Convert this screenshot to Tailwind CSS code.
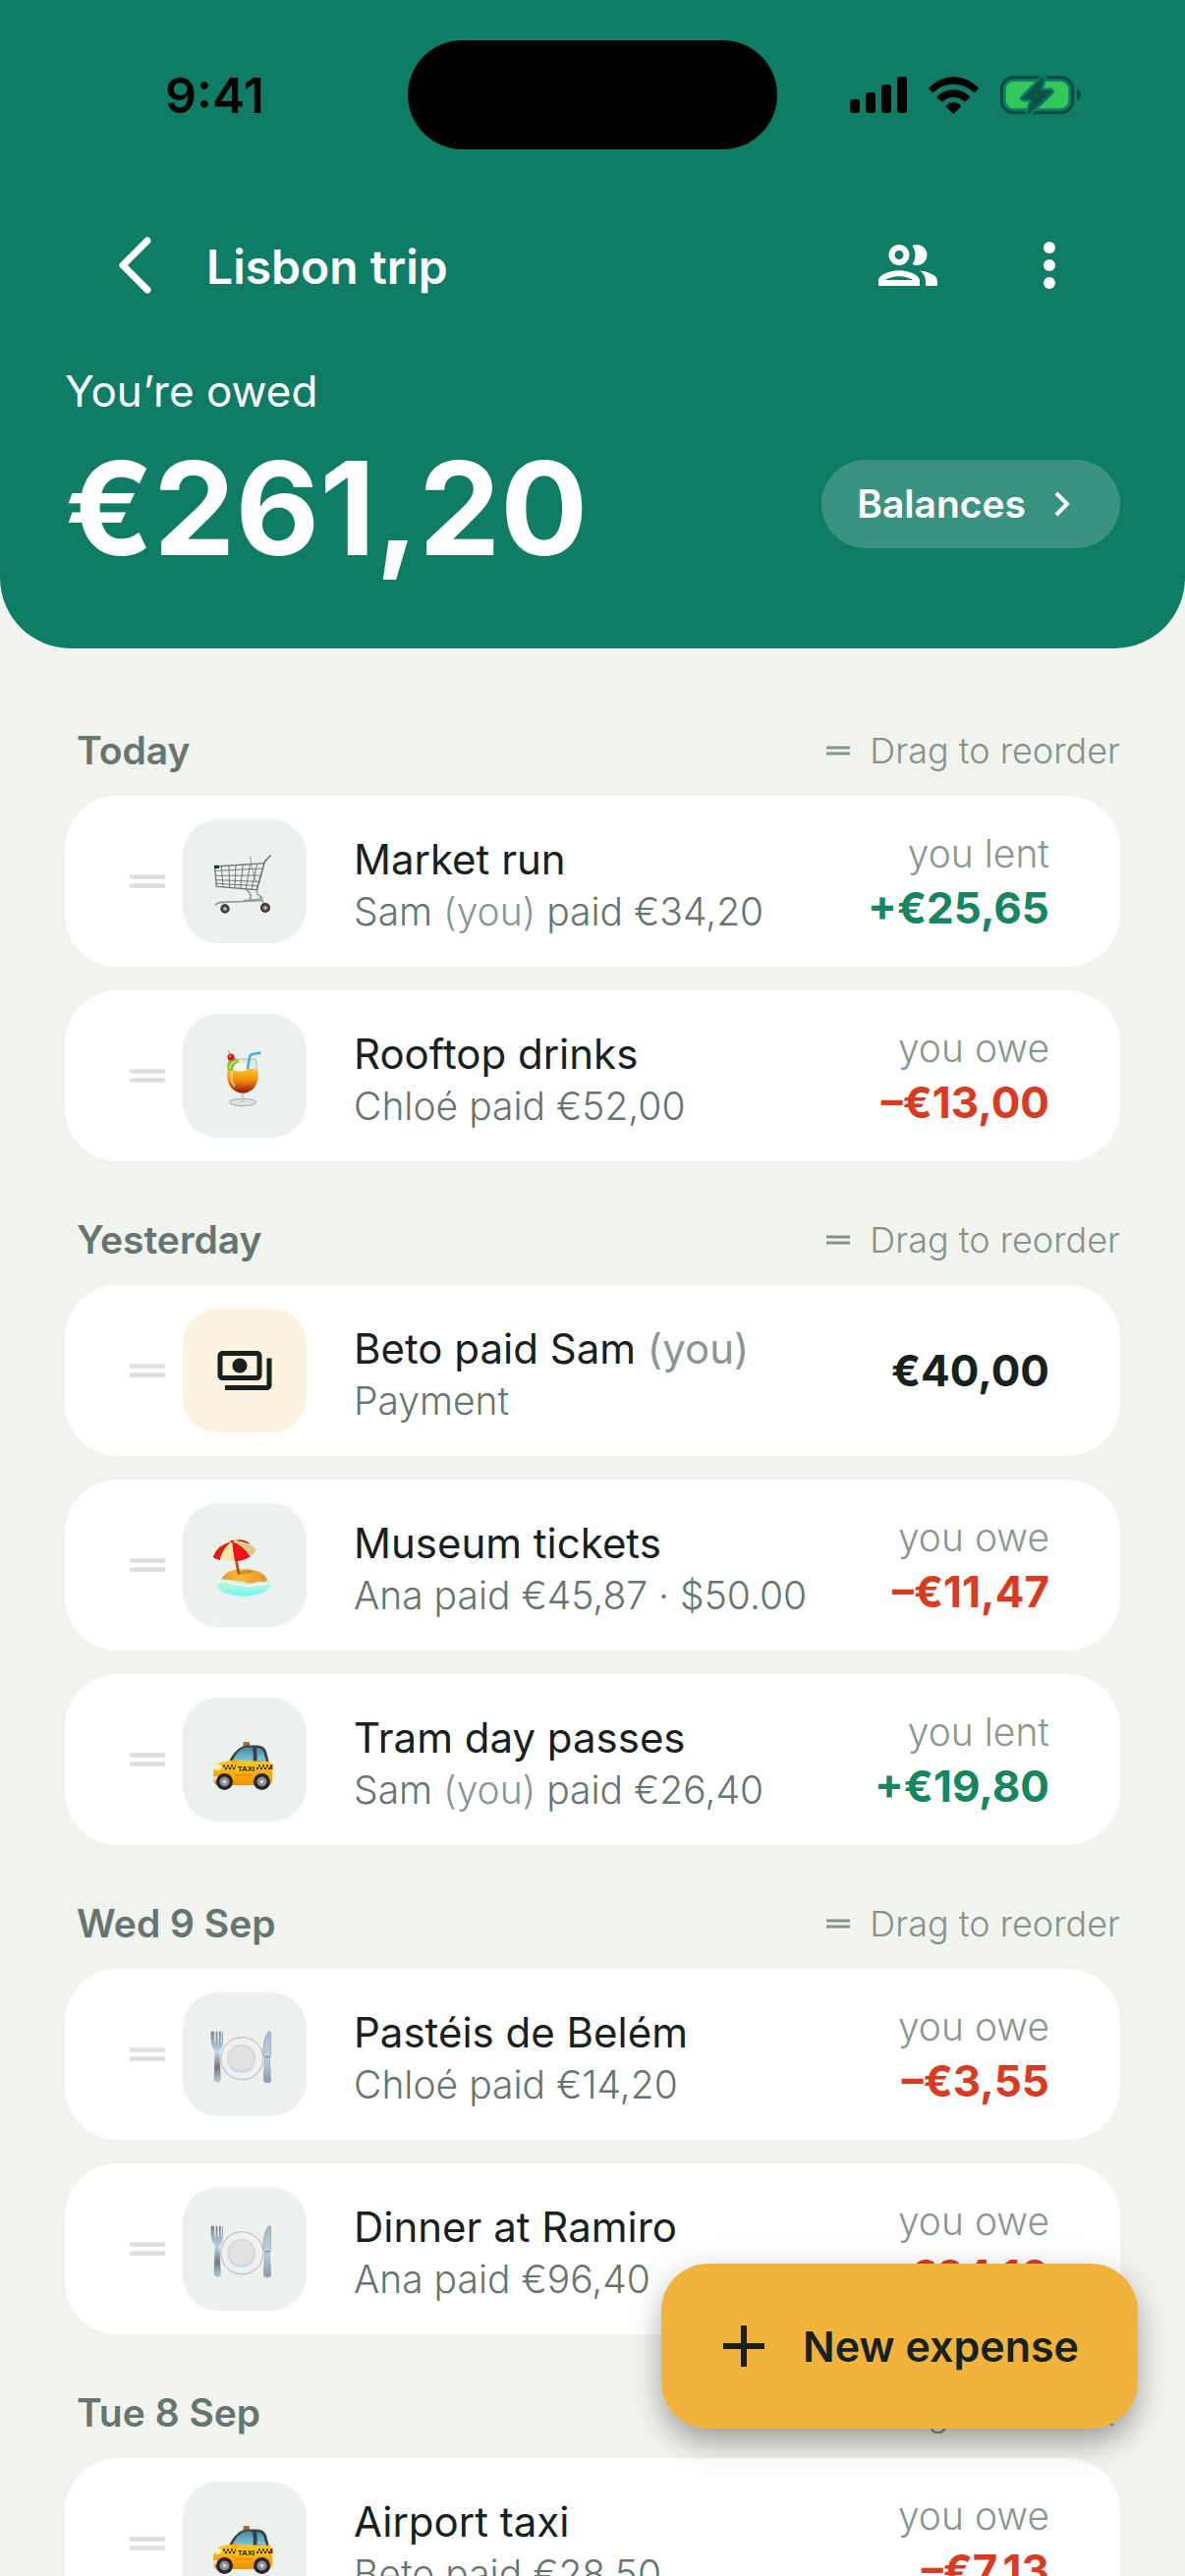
<!DOCTYPE html>
<html lang="en">
  <head>
    <meta charset="UTF-8" />
    <meta name="viewport" content="width=device-width, initial-scale=1.0" />
    <title>Lisbon trip</title>
    <!--tailwindcss CDN-->
    <script src="https://cdn.jsdelivr.net/npm/@tailwindcss/browser@4"></script>
  </head>
  <body class="bg-[#f1f3ee] font-['Inter',sans-serif] text-[#17211d]">
    <!--Shared icons-->
    <svg class="absolute w-0 h-0" aria-hidden="true" xmlns="http://www.w3.org/2000/svg">
      <defs>
        <linearGradient id="drink" x1="0" y1="0" x2="0" y2="1">
          <stop offset="0" stop-color="#ffc81e" />
          <stop offset="0.5" stop-color="#f48a10" />
          <stop offset="1" stop-color="#8c1408" />
        </linearGradient>
        <linearGradient id="sand" x1="0" y1="0" x2="1" y2="0">
          <stop offset="0" stop-color="#e09a3a" />
          <stop offset="0.4" stop-color="#fcb92c" />
          <stop offset="1" stop-color="#e0963c" />
        </linearGradient>
        <linearGradient id="sea" x1="0" y1="0" x2="0" y2="1">
          <stop offset="0" stop-color="#eaf3dc" />
          <stop offset="0.5" stop-color="#b4f3e4" />
          <stop offset="1" stop-color="#6ef7f2" />
        </linearGradient>
        <linearGradient id="taxiBody" x1="0" y1="0" x2="0" y2="1">
          <stop offset="0" stop-color="#ffc91f" />
          <stop offset="1" stop-color="#f29100" />
        </linearGradient>
        <linearGradient id="taxiGlass" x1="0" y1="0" x2="0" y2="1">
          <stop offset="0" stop-color="#3f8ea3" />
          <stop offset="1" stop-color="#86cbd6" />
        </linearGradient>
        <linearGradient id="steel" x1="0" y1="0" x2="0" y2="1">
          <stop offset="0" stop-color="#7c7f84" />
          <stop offset="0.4" stop-color="#b9d2ee" />
          <stop offset="0.7" stop-color="#77797d" />
          <stop offset="1" stop-color="#b5cbe4" />
        </linearGradient>
        <linearGradient id="blade" x1="0" y1="0" x2="0" y2="1">
          <stop offset="0" stop-color="#a9b5c2" />
          <stop offset="0.5" stop-color="#bcd0e6" />
          <stop offset="1" stop-color="#8b98a6" />
        </linearGradient>
      </defs>

      <symbol id="drag" viewBox="0 0 24 24">
        <path fill="currentColor" d="M20 9H4v2h16V9zM4 15h16v-2H4v2z" />
      </symbol>

      <symbol id="cart" viewBox="3 3 378 378">
        <g fill="none" stroke="#77777a" stroke-linecap="round" stroke-linejoin="round">
          <path stroke-width="3" stroke="#9b9b9d" d="M209 116l5 36 13 42" />
          <path stroke-width="4" d="M101 147l149-10M106 208l124 10M101 147l5 61" />
          <path stroke-width="5" d="M229 218l23-82q2-6 8-12l11-10" />
          <path stroke-width="3" d="M102 160l145-7M103 175l140-1M104 188l135 5M105 199l128 7" />
          <path stroke-width="3" d="M121 147l5 61M144 145l2 65M165 143l-3 68M187 142l-8 71M208 141l-12 74M230 139l-17 78" />
          <path stroke-width="5" stroke="#98999b" d="M196 217q24 18 10 32M230 218q-5 10 8 19 10 7 3 13l-60 4-62 2q-9 1-15 7" />
          <path stroke-width="4" stroke="#98999b" d="M190 250q38 0 49-5M243 240l7 24M126 258l5 10" />
        </g>
        <rect x="99" y="143" width="15" height="10" rx="2" fill="#1d3440" />
        <g fill="#77706f" stroke="#38322f" stroke-width="6">
          <circle cx="132" cy="276" r="11" />
          <circle cx="255" cy="273" r="12" />
        </g>
        <circle cx="132" cy="276" r="4" fill="#cfcfcf" />
        <circle cx="255" cy="273" r="4" fill="#cfcfcf" />
      </symbol>

      <symbol id="cocktail" viewBox="0 0 126 126">
        <ellipse cx="61" cy="90" rx="13.5" ry="3.6" fill="#dfe3e1" stroke="#a5aaa8" stroke-width="1" />
        <path d="M59.5 80h3v8q0 1 2 2h-7q2-1 2-2z" fill="#c9cdcb" />
        <path d="M47.500 46h27q0 6 1.500 13 1 7-1.500 12-4 9.500-13.500 10-9.500-.5-13.500-10-2.500-5-1.500-12 1.500-7 1.500-13z" fill="#e4e8de" stroke="#b9beb6" stroke-width="1" />
        <path d="M46 57q15-3 30 0 1.500 9-1 14-4 9-14 9.500-10-.5-14-9.500-2.500-5-1-14z" fill="url(#drink)" />
        <path d="M50 58q-2 10 3 16" fill="none" stroke="#fff" stroke-opacity=".5" stroke-width="2" />
        <ellipse cx="58" cy="54" rx="9" ry="4.500" fill="#fbf8e6" />
        <path d="M45.500 57q-1-11 5-12 5 0 7 4-6 1-7 9z" fill="#79bf2b" />
        <path d="M48 56q0-7 7-8" fill="none" stroke="#c9e87a" stroke-width="1.500" />
        <path d="M66 56l2-12q.5-2.500 3-3l8.500-1.500" fill="none" stroke="#3aaee8" stroke-width="2.400" />
        <path d="M46 37l3 6" stroke="#b1824a" stroke-width="1" />
        <circle cx="49" cy="44" r="3.600" fill="#dc1420" />
        <circle cx="48" cy="43" r="1" fill="#ff9c9c" />
      </symbol>

      <symbol id="beach" viewBox="3 0 378 378">
        <ellipse cx="189" cy="250" rx="82" ry="34" fill="url(#sea)" />
        <path d="M108 243q18-9 36-1 20 8 44 6 10 12 36 0 20 2 38-4" fill="none" stroke="#f4f6ea" stroke-width="7" />
        <path d="M121 232q12-28 60-31 66-1 80 32-4 10-24 6-10 0-18 5-22 1-30-5-38-5-68-7z" fill="url(#sand)" />
        <path d="M172 212q24-12 50-4-14 10-44 8z" fill="#a5651c" fill-opacity=".45" />
        <path d="M161 172l8-2 10 46q-5 4-9 1z" fill="#9a5a2c" />
        <path d="M95 165q14-42 57-52 50-10 74 28-2 11-20 23-20 10-44 15-36-10-67-14z" fill="#f7e7a4" />
        <path d="M95 165q14-38 57-47-28 20-36 56-10-2-21-9z" fill="#e01a18" />
        <path d="M154 118q30 8 56 44-18 14-48 16-6-30-8-60z" fill="#ec1416" />
        <path d="M162 113q32-6 46 12-22-7-46-12z" fill="#c9231c" />
        <path d="M156 116q44 2 70 24-2 12-18 23-18-34-52-47z" fill="#d9cb8c" />
        <ellipse cx="154" cy="116" rx="6" ry="3" fill="#b81a14" />
      </symbol>

      <symbol id="taxi" viewBox="0 0 126 126">
        <rect x="61.500" y="45" width="6.500" height="5" rx="1" fill="#a8712a" />
        <path d="M46 67q8-18 20-18.500h9q8 0 10 6l3.500 14z" fill="#383f45" />
        <path d="M50 66q5-14 15-15.500h5.500q2 6 1 14.500z" fill="url(#taxiGlass)" />
        <path d="M75 51q6 0 7.500 5l2.500 9-9.500-.5q.5-7-.5-13.500z" fill="url(#taxiGlass)" />
        <path d="M31 81q-1-9 5-14 6-3 14-3l24 .5 15 .5q3 10 2 20l-2 4H34q-3-2-3-8z" fill="url(#taxiBody)" />
        <path d="M41 69.500h49" stroke="#2d2400" stroke-width="2" stroke-dasharray="2 2" />
        <path d="M43 72h12M75 72h16" stroke="#2d2400" stroke-width="2" stroke-dasharray="2 2" />
        <rect x="54" y="67.500" width="21" height="8" fill="#ffc21b" />
        <text x="64.500" y="75" text-anchor="middle" font-family="Liberation Sans, sans-serif" font-size="8" font-weight="700" fill="#1f1a00">TAXI</text>
        <ellipse cx="36" cy="71" rx="3.500" ry="3" fill="#fdf3c4" />
        <ellipse cx="53" cy="65" rx="3" ry="2.500" fill="#f7a90c" />
        <path d="M53 79h18" stroke="#d98200" stroke-width="1" />
        <rect x="31" y="80" width="5" height="4" fill="#e4dcc0" />
        <rect x="89" y="68" width="2.500" height="5" fill="#a3261c" />
        <circle cx="42.500" cy="85.500" r="8.500" fill="#26262a" />
        <circle cx="80.500" cy="85.500" r="8.500" fill="#26262a" />
        <circle cx="42.500" cy="85.500" r="5" fill="#8c8c92" />
        <circle cx="80.500" cy="85.500" r="5" fill="#8c8c92" />
        <circle cx="42.500" cy="85.500" r="2" fill="#d0d0d4" />
        <circle cx="80.500" cy="85.500" r="2" fill="#d0d0d4" />
      </symbol>

      <symbol id="plate" viewBox="3 24 378 378">
        <circle cx="184" cy="226" r="65" fill="#e9e9e9" stroke="#a9adb4" stroke-width="2.500" />
        <circle cx="184" cy="224" r="60" fill="#f0f0f0" />
        <circle cx="182" cy="226" r="44" fill="#d9dadb" />
        <path d="M141 238q10 32 42 32 30 0 40-30-12 22-40 23-28 0-42-25z" fill="#c5dcf5" />
        <circle cx="182" cy="224" r="36" fill="#e2e2e2" />
        <path d="M94 143h5l1 34h3l1-34h5l1 34h3l1-34h5l1 34h2l1-34h2q3 40-4 52-5 5-6 10l4 82q0 12-10 12t-11-12l3-82q-1-6-7-12-6-12-5-50z" fill="url(#steel)" />
        <path d="M249 214q-3-45 16-70 5-4 7 2v70q-1 5-4 8l4 70q-2 6-11 6t-11-7l4-72q-4-2-5-7z" fill="url(#blade)" stroke="#8f9cab" stroke-width="2" />
        <path d="M254 221h15" stroke="#6f7986" stroke-width="3" />
      </symbol>
    </svg>

    <div class="relative h-screen flex flex-col overflow-hidden">
      <!--Header-->
      <header class="shrink-0 bg-[#0f7c66] text-white rounded-b-[72px] px-[66px] pb-[69px]">
        <!-- Status bar -->
        <div class="grid grid-cols-[1fr_376px_1fr] items-center pt-[41px] text-black">
          <time class="pl-[102px] text-[50px] leading-[60px] font-semibold">9:41</time>
          <div class="h-[111px] rounded-full bg-black"></div>
          <div class="flex items-center justify-end gap-[22px] pr-[40px]">
            <svg class="w-[58px] h-[38px]" viewBox="0 0 58 38">
              <rect x="0" y="23" width="10" height="14" rx="3" />
              <rect x="16" y="16" width="10" height="21" rx="3" />
              <rect x="32" y="8" width="10" height="29" rx="3" />
              <rect x="48" y="0" width="10" height="37" rx="3" />
            </svg>
            <svg class="w-[51px] h-[38px]" viewBox="0 0 153 114">
              <path d="M1 34Q33 1 76 1t76 33q1 3-1 5l-9 8q-3 2-5 0Q111 23 76 23T16 47q-3 2-5 0l-9-8q-2-2-1-5z" />
              <path d="M27 60q21-20 49-20t49 20q2 3 0 5l-12 11q-3 1-5-1Q95 63 76 63T45 75q-3 2-5 1L27 65q-2-2 0-5z" />
              <path d="M53 89q10-10 23-10t23 10q1 3-1 4l-20 19q-2 1-4 0L54 93q-2-2-1-4z" />
            </svg>
            <svg class="w-[82px] h-[42px]" viewBox="0 0 246 126">
              <rect x="4" y="8" width="217" height="108" rx="36" fill="none" stroke="#0a4b3e" stroke-width="9" />
              <path d="M234 45q12 5 12 17t-12 17z" fill="#0a4b3e" />
              <rect x="17" y="21" width="191" height="82" rx="24" fill="#34c759" />
              <path d="M128 3 66 67q-8 10 4 12h22l-13 38q1 10 12 5l68-65q6-10-4-13h-26l9-34q-1-10-10-7z" fill="#0b5446" stroke="#0f7c66" stroke-width="7" />
            </svg>
          </div>
        </div>

        <!-- Toolbar -->
        <nav class="mt-[64px] h-[108px] flex items-center">
          <button type="button" aria-label="Back" class="w-[144px] flex pl-9">
            <svg class="w-[72px] h-[72px]" viewBox="0 0 72 72" fill="none" stroke="currentColor" stroke-width="7" stroke-linecap="round" stroke-linejoin="round">
              <path d="M48 11 23 36l25 25" />
            </svg>
          </button>
          <h1 class="pt-1 text-[48px] leading-[60px] font-semibold">Lisbon trip</h1>
          <div class="ml-auto flex items-center gap-[72px] pr-9">
            <button type="button" aria-label="Members">
              <svg class="w-[72px] h-[72px]" viewBox="0 0 24 24" fill="currentColor">
                <path d="M9 13.750c-2.340 0-7 1.170-7 3.500V19h14v-1.750c0-2.330-4.660-3.500-7-3.500zM4.340 17c.84-.58 2.870-1.250 4.660-1.250s3.820.67 4.660 1.250H4.340zM9 12c1.930 0 3.500-1.570 3.500-3.500S10.930 5 9 5 5.500 6.570 5.500 8.500 7.070 12 9 12zm0-5c.83 0 1.500.67 1.500 1.500S9.830 10 9 10s-1.500-.67-1.500-1.500S8.170 7 9 7zm7.040 6.810c1.160.84 1.960 1.960 1.960 3.440V19h4v-1.750c0-2.020-3.500-3.170-5.960-3.440zM15 12c1.930 0 3.500-1.570 3.500-3.500S16.930 5 15 5c-.54 0-1.040.13-1.500.35.63.89 1 1.980 1 3.150s-.37 2.260-1 3.150c.46.22.96.35 1.500.35z" />
              </svg>
            </button>
            <button type="button" aria-label="More options">
              <svg class="w-[72px] h-[72px]" viewBox="0 0 24 24" fill="currentColor">
                <circle cx="12" cy="6" r="2" />
                <circle cx="12" cy="12" r="2" />
                <circle cx="12" cy="18" r="2" />
              </svg>
            </button>
          </div>
        </nav>

        <!-- Balance -->
        <p class="mt-11 text-[44px] leading-[60px]">You’re owed</p>
        <div class="mt-4 flex items-start justify-between">
          <p class="text-[132px] leading-[147px] font-bold">€261,20</p>
          <a href="#balances" class="mt-6 h-[90px] flex items-center gap-3 rounded-full bg-white/18 px-9 text-[39px] font-semibold">
            Balances
            <svg class="w-12 h-12" viewBox="0 0 48 48" fill="none" stroke="currentColor" stroke-width="4">
              <path d="m19 13 11 11-11 11" />
            </svg>
          </a>
        </div>
      </header>

      <!--Expenses-->
      <main class="flex-1 min-h-0 overflow-hidden px-[66px] pt-6">
        <section>
          <div class="flex items-center justify-between pt-[62px] pb-[28px] pl-3 leading-9">
            <h2 class="text-[39px] font-semibold text-[#66756d]">Today</h2>
            <p class="flex items-center gap-3 text-[36px] font-light text-[#84938b]">
              <svg class="w-10 h-9"><use href="#drag" /></svg>
              Drag to reorder
            </p>
          </div>
          <ul class="flex flex-col gap-6">
            <li class="h-[174px] flex items-center rounded-[54px] bg-white pl-[57px] pr-[72px]">
              <svg class="w-[54px] h-[54px] text-[#dedfde]"><use href="#drag" /></svg>
              <svg class="ml-[9px] w-[126px] h-[126px] rounded-[36px] bg-[#ecf1ee]"><use href="#cart" /></svg>
              <div class="ml-12 pt-2">
                <h3 class="text-[42px] leading-[54px]">Market run</h3>
                <p class="text-[39px] leading-[52px] font-light text-[#66756d]">Sam <span class="text-[#8a978f]">(you)</span> paid €34,20</p>
              </div>
              <div class="ml-auto text-right">
                <p class="text-[39px] leading-[54px] font-light text-[#8a978f]">you lent</p>
                <p class="text-[44px] leading-[56px] font-bold text-[#178560]">+€25,65</p>
              </div>
            </li>
            <li class="h-[174px] flex items-center rounded-[54px] bg-white pl-[57px] pr-[72px]">
              <svg class="w-[54px] h-[54px] text-[#dedfde]"><use href="#drag" /></svg>
              <svg class="ml-[9px] w-[126px] h-[126px] rounded-[36px] bg-[#ecf1ee]"><use href="#cocktail" /></svg>
              <div class="ml-12 pt-2">
                <h3 class="text-[42px] leading-[54px]">Rooftop drinks</h3>
                <p class="text-[39px] leading-[52px] font-light text-[#66756d]">Chloé paid €52,00</p>
              </div>
              <div class="ml-auto text-right">
                <p class="text-[39px] leading-[54px] font-light text-[#8a978f]">you owe</p>
                <p class="text-[44px] leading-[56px] font-bold text-[#d93a22]">–€13,00</p>
              </div>
            </li>
          </ul>
        </section>

        <section>
          <div class="flex items-center justify-between pt-[62px] pb-[28px] pl-3 leading-9">
            <h2 class="text-[39px] font-semibold text-[#66756d]">Yesterday</h2>
            <p class="flex items-center gap-3 text-[36px] font-light text-[#84938b]">
              <svg class="w-10 h-9"><use href="#drag" /></svg>
              Drag to reorder
            </p>
          </div>
          <ul class="flex flex-col gap-6">
            <li class="h-[174px] flex items-center rounded-[54px] bg-white pl-[57px] pr-[72px]">
              <svg class="w-[54px] h-[54px] text-[#dedfde]"><use href="#drag" /></svg>
              <div class="ml-[9px] w-[126px] h-[126px] flex items-center justify-center rounded-[36px] bg-[#fbf3de]">
                <svg class="w-[60px] h-[60px]" viewBox="0 0 24 24" fill="currentColor">
                  <path d="M19 14V6c0-1.100-.9-2-2-2H3c-1.100 0-2 .9-2 2v8c0 1.100.9 2 2 2h14c1.100 0 2-.9 2-2zm-2 0H3V6h14v8zm-7-7c-1.660 0-3 1.340-3 3s1.340 3 3 3 3-1.340 3-3-1.340-3-3-3zm13 0v11c0 1.100-.9 2-2 2H4v-2h17V7h2z" />
                </svg>
              </div>
              <div class="ml-12 pt-2">
                <h3 class="text-[42px] leading-[54px]">Beto paid Sam <span class="text-[#8a978f]">(you)</span></h3>
                <p class="text-[39px] leading-[52px] font-light text-[#66756d]">Payment</p>
              </div>
              <p class="ml-auto text-[44px] leading-[56px] font-bold">€40,00</p>
            </li>
            <li class="h-[174px] flex items-center rounded-[54px] bg-white pl-[57px] pr-[72px]">
              <svg class="w-[54px] h-[54px] text-[#dedfde]"><use href="#drag" /></svg>
              <svg class="ml-[9px] w-[126px] h-[126px] rounded-[36px] bg-[#ecf1ee]"><use href="#beach" /></svg>
              <div class="ml-12 pt-2">
                <h3 class="text-[42px] leading-[54px]">Museum tickets</h3>
                <p class="text-[39px] leading-[52px] font-light text-[#66756d]">Ana paid €45,87 · $50.00</p>
              </div>
              <div class="ml-auto text-right">
                <p class="text-[39px] leading-[54px] font-light text-[#8a978f]">you owe</p>
                <p class="text-[44px] leading-[56px] font-bold text-[#d93a22]">–€11,47</p>
              </div>
            </li>
            <li class="h-[174px] flex items-center rounded-[54px] bg-white pl-[57px] pr-[72px]">
              <svg class="w-[54px] h-[54px] text-[#dedfde]"><use href="#drag" /></svg>
              <svg class="ml-[9px] w-[126px] h-[126px] rounded-[36px] bg-[#ecf1ee]"><use href="#taxi" /></svg>
              <div class="ml-12 pt-2">
                <h3 class="text-[42px] leading-[54px]">Tram day passes</h3>
                <p class="text-[39px] leading-[52px] font-light text-[#66756d]">Sam <span class="text-[#8a978f]">(you)</span> paid €26,40</p>
              </div>
              <div class="ml-auto text-right">
                <p class="text-[39px] leading-[54px] font-light text-[#8a978f]">you lent</p>
                <p class="text-[44px] leading-[56px] font-bold text-[#178560]">+€19,80</p>
              </div>
            </li>
          </ul>
        </section>

        <section>
          <div class="flex items-center justify-between pt-[62px] pb-[28px] pl-3 leading-9">
            <h2 class="text-[39px] font-semibold text-[#66756d]">Wed 9 Sep</h2>
            <p class="flex items-center gap-3 text-[36px] font-light text-[#84938b]">
              <svg class="w-10 h-9"><use href="#drag" /></svg>
              Drag to reorder
            </p>
          </div>
          <ul class="flex flex-col gap-6">
            <li class="h-[174px] flex items-center rounded-[54px] bg-white pl-[57px] pr-[72px]">
              <svg class="w-[54px] h-[54px] text-[#dedfde]"><use href="#drag" /></svg>
              <svg class="ml-[9px] w-[126px] h-[126px] rounded-[36px] bg-[#ecf1ee]"><use href="#plate" /></svg>
              <div class="ml-12 pt-2">
                <h3 class="text-[42px] leading-[54px]">Pastéis de Belém</h3>
                <p class="text-[39px] leading-[52px] font-light text-[#66756d]">Chloé paid €14,20</p>
              </div>
              <div class="ml-auto text-right">
                <p class="text-[39px] leading-[54px] font-light text-[#8a978f]">you owe</p>
                <p class="text-[44px] leading-[56px] font-bold text-[#d93a22]">–€3,55</p>
              </div>
            </li>
            <li class="h-[174px] flex items-center rounded-[54px] bg-white pl-[57px] pr-[72px]">
              <svg class="w-[54px] h-[54px] text-[#dedfde]"><use href="#drag" /></svg>
              <svg class="ml-[9px] w-[126px] h-[126px] rounded-[36px] bg-[#ecf1ee]"><use href="#plate" /></svg>
              <div class="ml-12 pt-2">
                <h3 class="text-[42px] leading-[54px]">Dinner at Ramiro</h3>
                <p class="text-[39px] leading-[52px] font-light text-[#66756d]">Ana paid €96,40</p>
              </div>
              <div class="ml-auto text-right">
                <p class="text-[39px] leading-[54px] font-light text-[#8a978f]">you owe</p>
                <p class="text-[44px] leading-[56px] font-bold text-[#d93a22]">–€24,10</p>
              </div>
            </li>
          </ul>
        </section>

        <section>
          <div class="flex items-center justify-between pt-[62px] pb-[28px] pl-3 leading-9">
            <h2 class="text-[39px] font-semibold text-[#66756d]">Tue 8 Sep</h2>
            <p class="flex items-center gap-3 text-[36px] font-light text-[#84938b]">
              <svg class="w-10 h-9"><use href="#drag" /></svg>
              Drag to reorder
            </p>
          </div>
          <ul class="flex flex-col gap-6">
            <li class="h-[174px] flex items-center rounded-[54px] bg-white pl-[57px] pr-[72px]">
              <svg class="w-[54px] h-[54px] text-[#dedfde]"><use href="#drag" /></svg>
              <svg class="ml-[9px] w-[126px] h-[126px] rounded-[36px] bg-[#ecf1ee]"><use href="#taxi" /></svg>
              <div class="ml-12 pt-2">
                <h3 class="text-[42px] leading-[54px]">Airport taxi</h3>
                <p class="text-[39px] leading-[52px] font-light text-[#66756d]">Beto paid €28,50</p>
              </div>
              <div class="ml-auto text-right">
                <p class="text-[39px] leading-[54px] font-light text-[#8a978f]">you owe</p>
                <p class="text-[44px] leading-[56px] font-bold text-[#d93a22]">–€7,13</p>
              </div>
            </li>
          </ul>
        </section>
      </main>

      <!--New expense button-->
      <button
        type="button"
        class="absolute right-12 bottom-[150px] h-[168px] flex items-center gap-6 rounded-[48px] bg-[#f1b33c] pl-12 pr-[60px] text-[43px] font-semibold shadow-[0_18px_30px_-3px_rgb(0_0_0/0.28),0_3px_36px_rgb(0_0_0/0.12)]"
      >
        <svg class="w-[72px] h-[72px]" viewBox="0 0 24 24" fill="currentColor">
          <path d="M19 13h-6v6h-2v-6H5v-2h6V5h2v6h6v2z" />
        </svg>
        New expense
      </button>
    </div>
  </body>
</html>
